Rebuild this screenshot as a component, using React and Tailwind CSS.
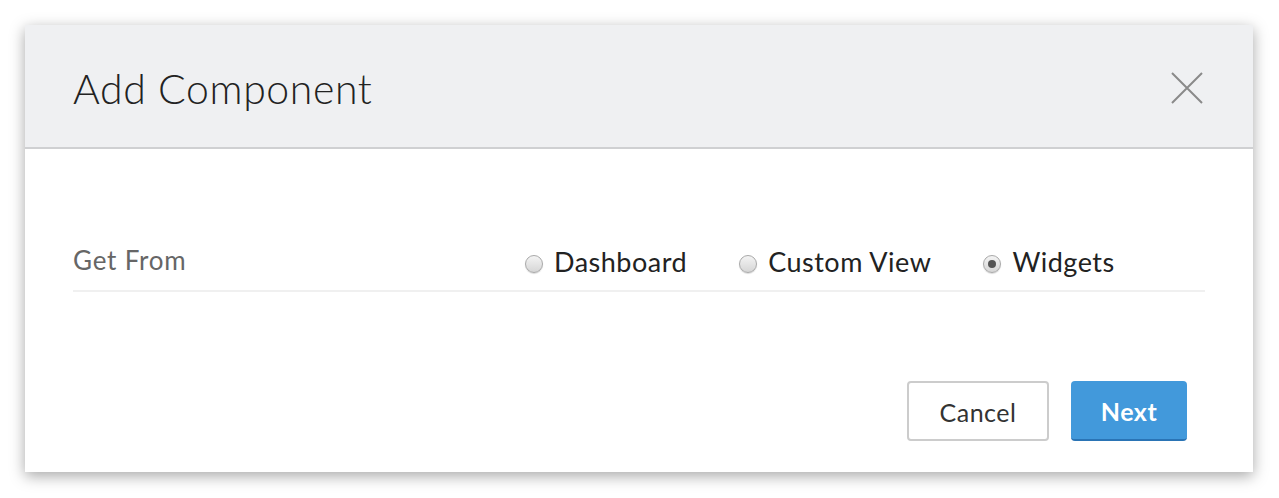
export default function App() {
  const options = [
    { label: "Dashboard", checked: false },
    { label: "Custom View", checked: false },
    { label: "Widgets", checked: true },
  ];

  return (
    <div
      className="w-[1279px] h-[498px] bg-white pt-[25px] pl-[25px]"
      style={{ fontFamily: "Lato, 'Open Sans', sans-serif" }}
    >
      <div className="w-[1228px] h-[447px] bg-white flex flex-col shadow-[0_4px_14px_rgba(0,0,0,0.35)]">
        <div className="h-[124px] bg-[#eff0f2] border-b-2 border-[#cfd0d2] flex items-center justify-between pl-[48px] pr-[50px] shrink-0">
          <h1 className="text-[41px] font-light text-[#222] tracking-[0.6px] mt-[6px]">Add Component</h1>
          <button className="w-[32px] h-[32px] flex items-center justify-center mt-[4px]">
            <svg width="32" height="32" viewBox="0 0 32 32">
              <path d="M1 1 L31 31 M31 1 L1 31" stroke="#8a8a8a" strokeWidth="2" fill="none" />
            </svg>
          </button>
        </div>

        <div className="px-[48px] pt-[93px]">
          <div className="flex items-center h-[50px] border-b-2 border-[#f0f0f0]">
            <span className="text-[26px] text-[#666] w-[452px] -mt-[12px] tracking-[0.8px]">Get From</span>
            <div className="flex items-center -mt-[7px]">
              {options.map((o) => (
                <label key={o.label} className="flex items-center mr-[52px]">
                  <span className="w-[18px] h-[18px] rounded-full border border-[#a9a9a9] bg-gradient-to-b from-[#f4f4f4] to-[#d6d6d6] shadow-[0_1px_1px_rgba(0,0,0,0.15)] flex items-center justify-center mr-[11px] mt-[2px]">
                    {o.checked && <span className="w-[8px] h-[8px] rounded-full bg-[#555]" />}
                  </span>
                  <span className="text-[27px] text-[#222] tracking-[0.5px]">{o.label}</span>
                </label>
              ))}
            </div>
          </div>
        </div>

        <div className="flex justify-end pr-[66px] mt-[89px] gap-[22px]">
          <button className="w-[142px] h-[60px] pt-[3px] border-2 border-[#cccccc] rounded-[4px] bg-white text-[25px] text-[#333] tracking-[0.5px]">
            Cancel
          </button>
          <button className="w-[116px] h-[60px] pt-[3px] rounded-[4px] bg-[#4299db] border-b-2 border-[#2a74b5] text-[25px] font-bold text-white tracking-[0.5px]">
            Next
          </button>
        </div>
      </div>
    </div>
  );
}
